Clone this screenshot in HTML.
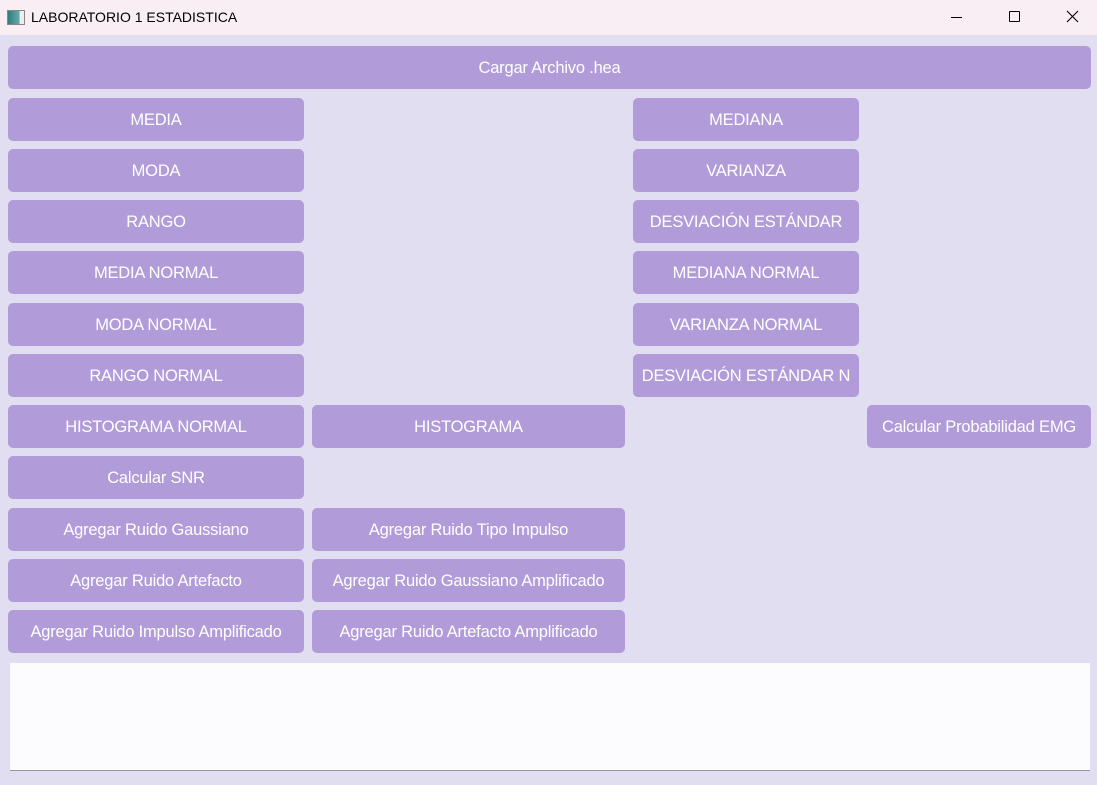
<!DOCTYPE html><html><head><style>
body{margin:0;width:1097px;height:785px;background:#e1def1;font-family:"Liberation Sans",sans-serif;position:relative;overflow:hidden}
.tb{position:absolute;left:0;top:0;width:1097px;height:35px;background:#f8eef3;font-size:14px;color:#000}
.b{position:absolute;background:#b19cd9;border-radius:5px;color:#fff;font-size:16.5px;display:flex;align-items:center;justify-content:center;height:41px;padding-top:2px;white-space:nowrap;overflow:hidden;letter-spacing:-0.2px}
</style></head><body>
<div class="tb">
<div style="position:absolute;left:7px;top:10px;width:16px;height:13px;border:1px solid #888;background:linear-gradient(90deg,#2a7f7f,#6aa 70%,#eee 75%)"></div>
<div style="position:absolute;left:31px;top:9px">LABORATORIO 1 ESTADISTICA</div>
<div style="position:absolute;left:951px;top:17px;width:11px;height:1px;background:#000"></div>
<div style="position:absolute;left:1009px;top:11px;width:9px;height:9px;border:1px solid #000;border-radius:1px"></div>
<svg style="position:absolute;left:1066px;top:10px" width="13" height="13"><path d="M1 1L12 12M12 1L1 12" stroke="#000" stroke-width="1.1"/></svg>
</div>
<div class="b" style="left:8px;top:46px;width:1083px">Cargar Archivo .hea</div>
<div class="b" style="left:8px;top:98px;width:296px">MEDIA</div>
<div class="b" style="left:633px;top:98px;width:226px">MEDIANA</div>
<div class="b" style="left:8px;top:149px;width:296px">MODA</div>
<div class="b" style="left:633px;top:149px;width:226px">VARIANZA</div>
<div class="b" style="left:8px;top:200px;width:296px">RANGO</div>
<div class="b" style="left:633px;top:200px;width:226px">DESVIACIÓN ESTÁNDAR</div>
<div class="b" style="left:8px;top:251px;width:296px">MEDIA NORMAL</div>
<div class="b" style="left:633px;top:251px;width:226px">MEDIANA NORMAL</div>
<div class="b" style="left:8px;top:303px;width:296px">MODA NORMAL</div>
<div class="b" style="left:633px;top:303px;width:226px">VARIANZA NORMAL</div>
<div class="b" style="left:8px;top:354px;width:296px">RANGO NORMAL</div>
<div class="b" style="left:633px;top:354px;width:226px">DESVIACIÓN ESTÁNDAR N</div>
<div class="b" style="left:8px;top:405px;width:296px">HISTOGRAMA NORMAL</div>
<div class="b" style="left:312px;top:405px;width:313px">HISTOGRAMA</div>
<div class="b" style="left:867px;top:405px;width:224px">Calcular Probabilidad EMG</div>
<div class="b" style="left:8px;top:456px;width:296px">Calcular SNR</div>
<div class="b" style="left:8px;top:508px;width:296px">Agregar Ruido Gaussiano</div>
<div class="b" style="left:312px;top:508px;width:313px">Agregar Ruido Tipo Impulso</div>
<div class="b" style="left:8px;top:559px;width:296px">Agregar Ruido Artefacto</div>
<div class="b" style="left:312px;top:559px;width:313px">Agregar Ruido Gaussiano Amplificado</div>
<div class="b" style="left:8px;top:610px;width:296px">Agregar Ruido Impulso Amplificado</div>
<div class="b" style="left:312px;top:610px;width:313px">Agregar Ruido Artefacto Amplificado</div>
<div style="position:absolute;left:10px;top:663px;width:1080px;height:107px;background:#fcfcfe;border-bottom:1px solid #999"></div>
</body></html>
